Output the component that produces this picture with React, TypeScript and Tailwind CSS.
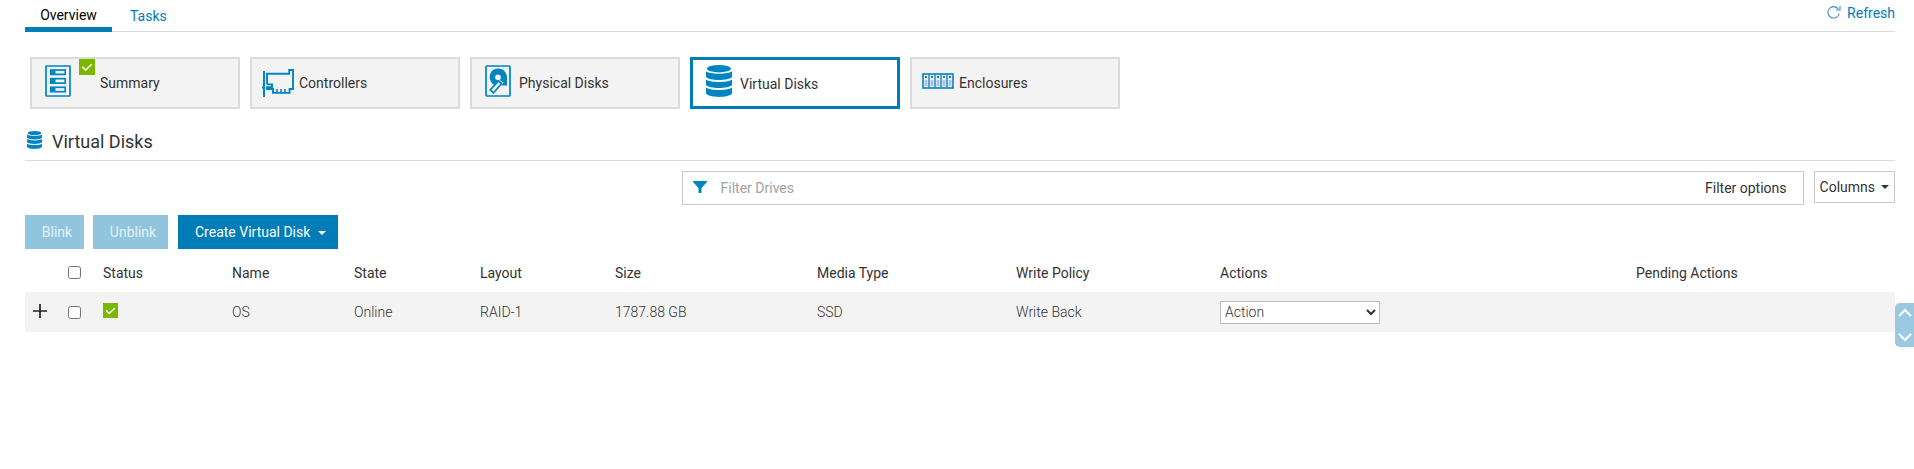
import React, { useState } from "react";

function StackIcon({ className }: { className: string }) {
  return (
    <svg viewBox="0 0 26 32" className={className} fill="#0085c3" preserveAspectRatio="none" aria-hidden="true">
      <ellipse cx="13" cy="3.7" rx="12" ry="3.7" />
      <path d="M0 6.2C3 9.5 23 9.5 26 6.2V12C23 16 3 16 0 12z" />
      <path d="M0 14.4C3 17.7 23 17.7 26 14.4V20C23 24 3 24 0 20z" />
      <path d="M0 22.6C3 25.9 23 25.9 26 22.6V28.6C23 33.1 3 33.1 0 28.6z" />
    </svg>
  );
}

function CheckBadge({ className }: { className: string }) {
  return (
    <svg viewBox="0 0 16 16" className={className} role="img" aria-label="OK">
      <rect width="16" height="16" fill="#7ab800" />
      <path d="M3.2 7.8l3.4 3.3 6.2-5.8" fill="none" stroke="#fff" strokeWidth="1.5" />
    </svg>
  );
}

function SummaryIcon() {
  return (
    <svg viewBox="0 0 26 32" className="h-8 w-[26px]" fill="none" stroke="#0085c3" aria-hidden="true">
      <rect x="1" y="1" width="24" height="30" rx="0.5" strokeWidth="1.7" />
      {[5, 13.7, 22.3].map((y) => (
        <g key={y}>
          <rect x="5.8" y={y} width="14.4" height="4.4" strokeWidth="1.7" />
          <rect x="6" y={y} width="4.5" height="4.4" fill="#0085c3" stroke="none" />
        </g>
      ))}
    </svg>
  );
}

function ControllerIcon() {
  return (
    <svg viewBox="0 0 32 28" className="h-7 w-8" fill="none" stroke="#0085c3" aria-hidden="true">
      <path d="M2 2v26M0 18.6h2" strokeWidth="2" />
      <path
        d="M5 15.400V4.800h22.200V1h3.800v19h-3.400v3.900H11V20H5v-1.800h5v-2.800H5"
        strokeWidth="1.9"
      />
      <path d="M15 20v4M19 20v4M23 20v4" strokeWidth="1.6" />
    </svg>
  );
}

function PhysicalDiskIcon() {
  return (
    <svg viewBox="0 0 26 32" className="h-8 w-[26px]" fill="none" stroke="#0085c3" aria-hidden="true">
      <rect x="1" y="1" width="24" height="30" rx="1" strokeWidth="1.7" />
      <path
        d="M22 20.500h-5.500l2-3-3.500-2.500-5.500 5C2.500 17 3 3.800 13 3.600c5.500 0 9 4 9 9z"
        fill="#0085c3"
        stroke="none"
      />
      <circle cx="13" cy="12.300" r="2.900" fill="#f3f3f3" stroke="none" />
      <path d="M13.600 16l3 2.500-8.100 9.300-3.300-2.900z" fill="#f3f3f3" strokeWidth="1.700" />
    </svg>
  );
}

function EnclosureIcon() {
  return (
    <svg viewBox="0 0 32 16" className="h-4 w-8" aria-hidden="true">
      <rect x="1" y="1" width="30" height="14" fill="#e9f1f6" stroke="#0085c3" strokeWidth="1.6" />
      {[4, 10, 16, 22, 28].map((x) => (
        <g key={x}>
          <rect x={x - 1} y="3" width="2" height="2" fill="#2f74ad" />
          <rect x={x - 1.5} y="7" width="3" height="6" fill="#b3c4df" />
          {x < 28 && <rect x={x + 2.3} y="1" width="1.4" height="14" fill="#1787c5" />}
        </g>
      ))}
    </svg>
  );
}

function Caret({ className }: { className: string }) {
  return (
    <svg viewBox="0 0 8 4" className={className} fill="currentColor" aria-hidden="true">
      <path d="M0 0h8L4 4z" />
    </svg>
  );
}

const cardBase = "flex h-[52px] w-[210px] items-center text-left text-[#333]";
const cardIdle = "border-2 border-[#dcdcdc] bg-[#f3f3f3]";

const headings = ["Status", "Name", "State", "Layout", "Size", "Media Type", "Write Policy", "Actions", "Pending Actions"];

export default function App() {
  const [picked, setPicked] = useState(false);
  const box = "m-0 block size-[13px]";

  return (
    <div className="bg-white pl-[25px] pr-[19px] font-['Roboto',sans-serif] text-sm leading-5 text-[#333]">
      <header className="flex h-8 items-start justify-between border-b border-[#dcdcdc]">
        <nav className="flex h-8">
          <a href="#overview" className="flex h-8 w-[87px] justify-center border-b-[5px] border-[#007db8] pt-[5px] text-black">
            Overview
          </a>
          <a href="#tasks" className="ml-[18px] pt-1.5 text-[#007db8]">
            Tasks
          </a>
        </nav>
        <button type="button" className="flex items-center gap-[6px] pt-[3px] text-[#007db8]">
          <svg viewBox="0 0 14 14" className="mb-[2px] size-[14px]" fill="none" stroke="#3a8fc2" strokeWidth="1.1" aria-hidden="true">
            <path d="M11.400 4.200A5.700 5.700 0 1 0 12.200 8.500" />
            <path d="M13 1v4H9" />
          </svg>
          Refresh
        </button>
      </header>

      <div className="mt-[25px] flex flex-wrap gap-[10px] pl-[5px]">
        <button type="button" className={`${cardBase} ${cardIdle} pl-[13px]`}>
          <span className="relative pb-1 pr-[29px]">
            <SummaryIcon />
            <CheckBadge className="absolute -top-1.5 left-[34px] size-4" />
          </span>
          Summary
        </button>
        <button type="button" className={`${cardBase} ${cardIdle} gap-[5px] pl-[10px]`}>
          <ControllerIcon />
          Controllers
        </button>
        <button type="button" className={`${cardBase} ${cardIdle} gap-2 pl-[13px]`}>
          <span className="pb-1">
            <PhysicalDiskIcon />
          </span>
          Physical Disks
        </button>
        <button type="button" aria-pressed="true" className={`${cardBase} gap-2 border-[3px] border-[#007db8] bg-white pl-[13px]`}>
          <StackIcon className="mb-1 h-8 w-[26px]" />
          <span className="pt-[2px]">Virtual Disks</span>
        </button>
        <button type="button" className={`${cardBase} ${cardIdle} gap-[5px] pl-[10px]`}>
          <span className="pb-1">
            <EnclosureIcon />
          </span>
          Enclosures
        </button>
      </div>

      <h1 className="mt-4 flex h-9 items-center gap-[10px] border-b border-[#dcdcdc] pb-[2px] pl-[2px] text-lg font-normal">
        <StackIcon className="mb-[3px] h-[18px] w-[15px]" />
        Virtual Disks
      </h1>

      <div className="mt-[10px] flex items-start justify-end gap-[10px]">
        <div className="flex h-[34px] w-3/5 items-center border border-[#c8c8c8] pl-[10px] pr-4">
          <svg viewBox="0 0 14 12" className="mb-[2px] h-3 w-[14px]" fill="#0085c3" aria-hidden="true">
            <path d="M0 0h14v1L8.500 7v5h-3V7L0 1z" />
          </svg>
          <input
            type="text"
            aria-label="Filter Drives"
            placeholder="Filter Drives"
            className="ml-[14px] min-w-0 flex-1 bg-transparent outline-none placeholder:text-[#a2a2a2]"
          />
          <button type="button">Filter options</button>
        </div>
        <button type="button" className="flex h-8 items-center gap-[6px] border border-[#c8c8c8] px-[5px]">
          Columns
          <Caret className="h-1 w-2" />
        </button>
      </div>

      <div className="mt-[10px] flex text-white">
        <button type="button" disabled className="h-[34px] w-[59px] bg-[#91c5dd] pl-[5px] text-[#e3f1f7]">
          Blink
        </button>
        <button type="button" disabled className="ml-[9px] h-[34px] w-[75px] bg-[#91c5dd] pl-[5px] text-[#e3f1f7]">
          Unblink
        </button>
        <button type="button" className="ml-[10px] flex h-[34px] w-40 items-center gap-2 bg-[#007db8] pl-[17px]">
          Create Virtual Disk
          <Caret className="mt-[2px] h-1 w-2" />
        </button>
      </div>

      <table className="w-full table-fixed border-collapse text-left">
        <colgroup>
          <col className="w-[43px]" />
          <col className="w-[35px]" />
          <col className="w-[129px]" />
          <col className="w-[122px]" />
          <col className="w-[126px]" />
          <col className="w-[135px]" />
          <col className="w-[202px]" />
          <col className="w-[199px]" />
          <col className="w-[204px]" />
          <col className="w-[416px]" />
          <col />
        </colgroup>
        <thead>
          <tr className="h-[43px]">
            <th className="p-0" />
            <th className="p-0 pt-1">
              <input type="checkbox" aria-label="Select all" className={box} checked={picked} onChange={() => setPicked(!picked)} />
            </th>
            {headings.map((h) => (
              <th key={h} className="p-0 pt-[5px] font-normal">
                {h}
              </th>
            ))}
          </tr>
        </thead>
        <tbody>
          <tr className="h-10 bg-[#f3f3f3] font-light">
            <td className="p-0 pb-[2px] pl-2">
              <button type="button" aria-label="Expand row" className="block">
                <svg viewBox="0 0 14 14" className="size-[14px]" stroke="#222" strokeWidth="1.7" aria-hidden="true">
                  <path d="M7 0v14M0 7h14" />
                </svg>
              </button>
            </td>
            <td className="p-0">
              <input type="checkbox" aria-label="Select OS" className={box} checked={picked} onChange={() => setPicked(!picked)} />
            </td>
            <td className="p-0 pb-1">
              <CheckBadge className="block size-[15px]" />
            </td>
            <td className="p-0">OS</td>
            <td className="p-0">Online</td>
            <td className="p-0">RAID-1</td>
            <td className="p-0">1787.88 GB</td>
            <td className="p-0">SSD</td>
            <td className="p-0">Write Back</td>
            <td className="p-0">
              <select aria-label="Action" className="block h-[23px] w-40 border border-[#bbb] bg-white font-light">
                <option>Action</option>
              </select>
            </td>
            <td className="p-0" />
          </tr>
        </tbody>
      </table>

      <div className="fixed right-0 top-[303px] flex h-11 w-[19px] flex-col items-center justify-between rounded-l-[5px] bg-[#99cae2] py-[5px]">
        <button type="button" aria-label="Scroll up">
          <svg viewBox="0 0 14 9" className="block h-[9px] w-[14px]" fill="none" stroke="#fff" strokeWidth="2" aria-hidden="true">
            <path d="M1 8l6-6 6 6" />
          </svg>
        </button>
        <button type="button" aria-label="Scroll down">
          <svg viewBox="0 0 14 9" className="block h-[9px] w-[14px]" fill="none" stroke="#fff" strokeWidth="2" aria-hidden="true">
            <path d="M1 1l6 6 6-6" />
          </svg>
        </button>
      </div>
    </div>
  );
}
